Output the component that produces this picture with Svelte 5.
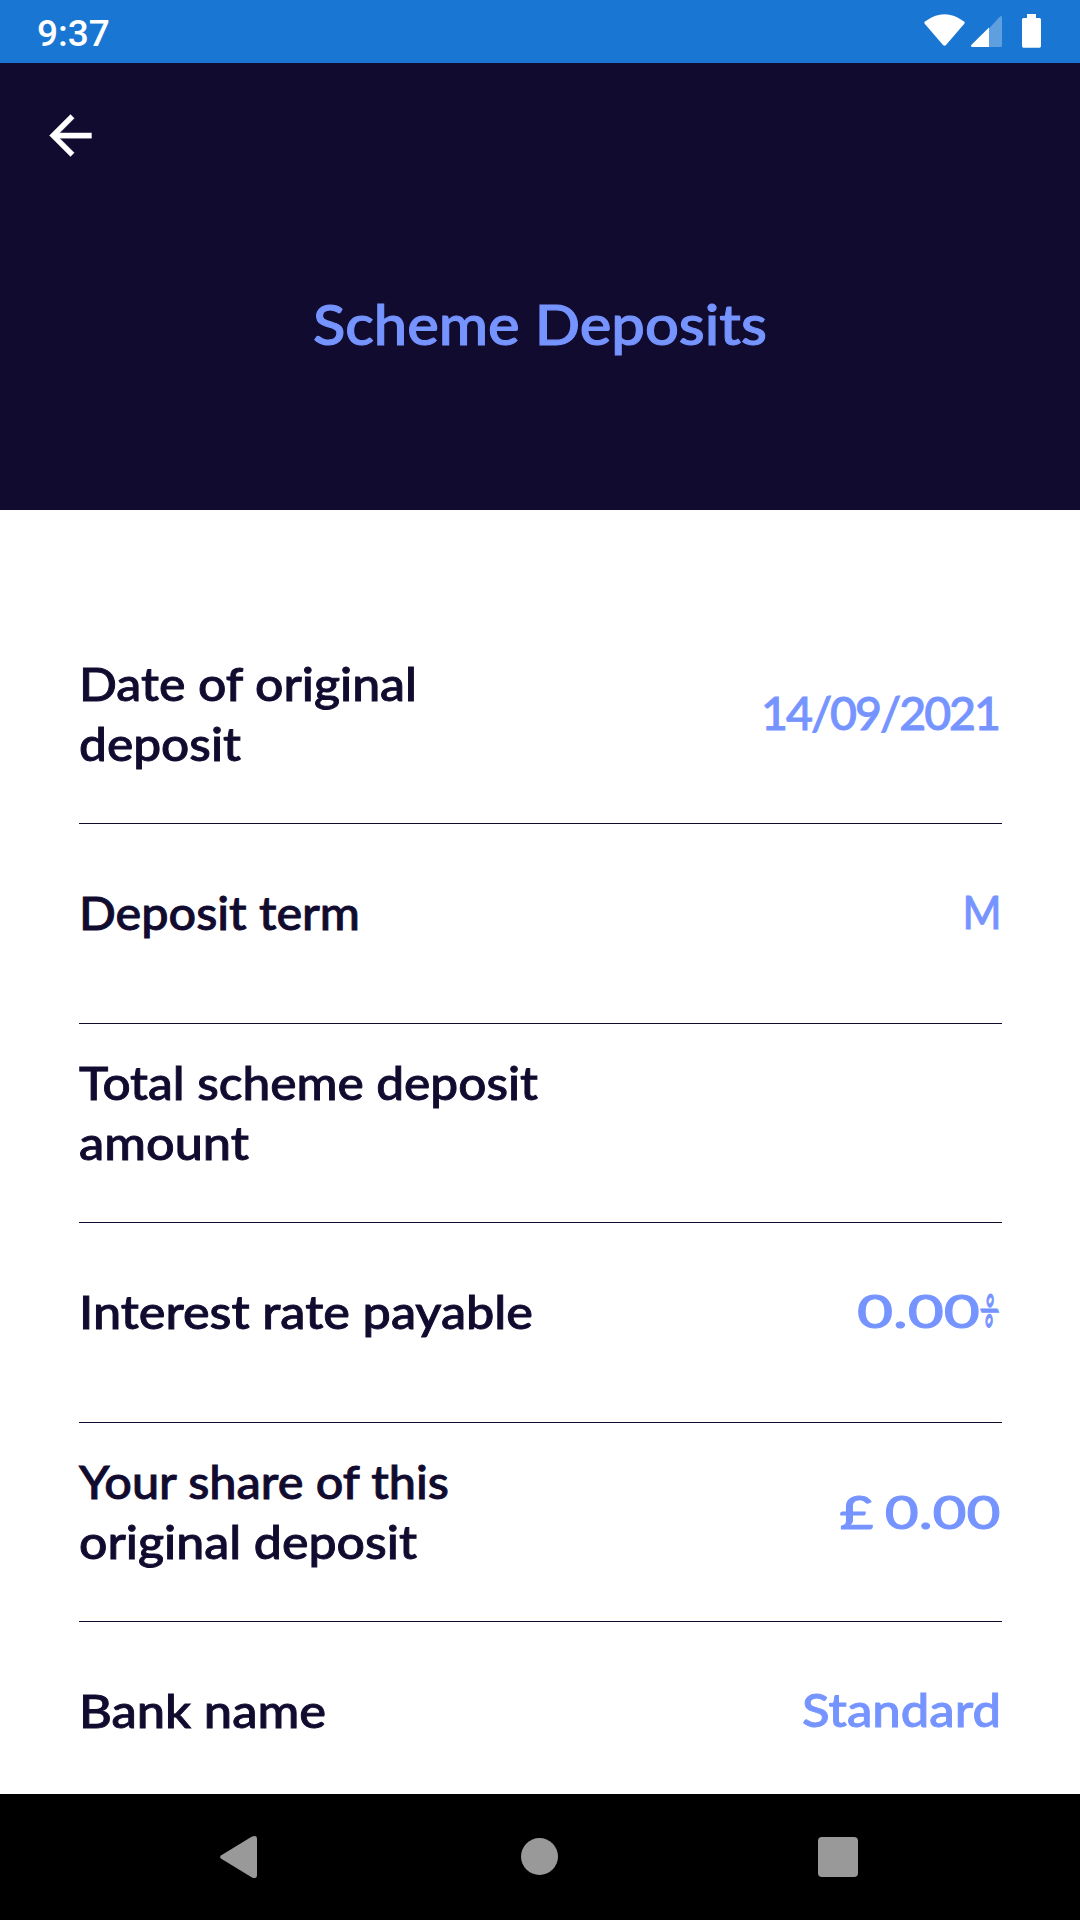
<script>
  const rows = [
    { lines: [['Date of original', 338], ['deposit', 162]], value: '14/09/2021', width: 240, track: true },
    { lines: [['Deposit term', 281]], value: 'M', width: 39 },
    { lines: [['Total scheme deposit', 459], ['amount', 170]], value: '', width: 0 },
    { lines: [['Interest rate payable', 454]], value: '0.00', width: 123, percent: true },
    { lines: [['Your share of this', 370], ['original deposit', 338]], value: '£ 0.00', width: 161 },
    { lines: [['Bank name', 247]], value: 'Standard', width: 199 }
  ];

  // Spreads a line of text over the given width, by tracking or by glyph width.
  function fit(node, { width, track = false }) {
    const natural = node.getBoundingClientRect().width;
    if (!natural || !width) return;
    if (!track) {
      node.style.transform = `scaleX(${width / natural})`;
      return;
    }
    const gap = (width - natural) / (node.textContent.length - 1);
    node.style.letterSpacing = `${gap}px`;
    node.style.marginRight = `${-gap}px`;
  }
</script>

<div class="screen">
  <div class="status">
    <span class="time">9:37</span>
    <svg class="indicators" width="120" height="63" viewBox="922 0 120 63">
      <path d="M925 21.5Q944.5 7 964 21.5Q965.300 22.500 964.300 23.800L946 45Q944.500 46.500 943 45L924.700 23.800Q923.700 22.500 925 21.500Z" fill="#fff" />
      <path d="M989 28.500L1000 16.500Q1002 15 1002 17.500V45.500Q1002 47 1000.500 47H989Z" fill="#fff" opacity=".3" />
      <path d="M989 27.500V47H972.500Q970 47 971.500 44.800Z" fill="#fff" />
      <path d="M1027 14H1036V18H1039.500Q1041 18 1041 19.500V46Q1041 47.700 1039.500 47.700H1023.500Q1022 47.700 1022 46V19.500Q1022 18 1023.500 18H1027Z" fill="#fff" />
    </svg>
  </div>

  <header>
    <svg class="back" width="63" height="63" viewBox="0 0 24 24">
      <path d="M20 11H7.830l5.590-5.590L12 4l-8 8 8 8 1.410-1.410L7.830 13H20v-2z" fill="#fff" stroke="#fff" stroke-width=".15" />
    </svg>
    <h1><span class="line" use:fit={{ width: 454 }}>Scheme Deposits</span></h1>
  </header>

  <main>
    {#each rows as row}
      <div class="row" class:single={row.lines.length === 1}>
        <div class="label">
          {#each row.lines as [text, width]}
            <div><span class="line" use:fit={{ width }}>{text}</span></div>
          {/each}
        </div>
        <div class="value">
          {#if row.value}<span class="line" use:fit={{ width: row.width, track: row.track }}>{row.value}</span>{/if}{#if row.percent}<span class="percent">%</span>{/if}
        </div>
      </div>
    {/each}
  </main>

  <nav>
    <svg width="1080" height="126" viewBox="0 0 1080 126" fill="#999">
      <path d="M221.300 61.200Q219 63 221.300 64.800L252 83.400Q257 85.500 257 81V45Q257 40.500 252 42.600Z" />
      <circle cx="539.500" cy="62.500" r="18.500" />
      <rect x="818" y="43" width="40" height="40" rx="4" />
    </svg>
  </nav>
</div>

<style>
  :global(body) {
    margin: 0;
  }

  .screen {
    width: 1080px;
    height: 1920px;
    display: flex;
    flex-direction: column;
    overflow: hidden;
    background: #fff;
    color: #110b2f;
    font-family: Lato, sans-serif;
    font-weight: 500;
  }

  .status {
    flex: none;
    display: flex;
    justify-content: space-between;
    height: 63px;
    padding: 0 38px 0 37px;
    background: #1976d2;
  }

  .time {
    color: #fff;
    font: 500 37px/67px Roboto, sans-serif;
  }

  header {
    flex: none;
    box-sizing: border-box;
    height: 447px;
    padding-top: 41px;
    background: #110b2f;
  }

  .back {
    display: block;
    margin-left: 39px;
  }

  h1 {
    margin: 115.500px 0 0;
    text-align: center;
    font-size: 56.500px;
    line-height: 80px;
    font-weight: 500;
    color: #7694ff;
  }

  h1 .line {
    transform-origin: center;
    -webkit-text-stroke: 1.100px currentColor;
  }

  main {
    flex: 1;
    min-height: 0;
    overflow: hidden;
    padding: 114.400px 78px 0 79px;
  }

  .row {
    box-sizing: border-box;
    height: 199.600px;
    padding-bottom: 21.500px;
    border-bottom: 1px solid #110b2f;
    display: flex;
    align-items: center;
    justify-content: space-between;
    font-size: 46.500px;
    line-height: 60px;
    white-space: nowrap;
  }

  .single {
    padding-bottom: 23px;
  }

  .line {
    display: inline-block;
    white-space: pre;
    transform-origin: left;
    -webkit-text-stroke: 0.900px currentColor;
  }

  .value {
    display: flex;
    color: #7694ff;
    padding: 0 1px 1.500px 0;
  }

  .value .line {
    transform-origin: right;
    word-spacing: -3px;
  }

  .percent {
    display: flex;
    justify-content: center;
    width: 14px;
    margin: 0 4px 0 3px;
    transform: scale(0.4, 0.8) rotate(53deg);
    -webkit-text-stroke: 2px currentColor;
  }

  nav {
    flex: none;
    height: 126px;
    background: #000;
  }

  nav svg {
    display: block;
  }
</style>
